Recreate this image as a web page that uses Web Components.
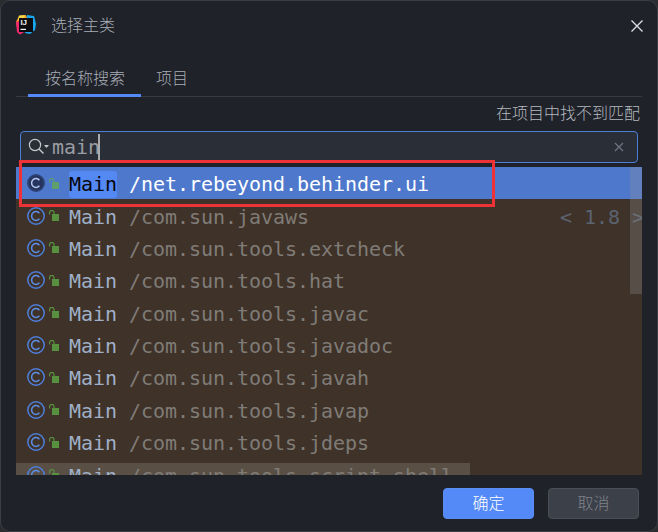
<!DOCTYPE html>
<html lang="zh">
<head>
<meta charset="utf-8">
<title>选择主类</title>
<style>
  html, body { margin: 0; height: 100%; background: #2a2c30; }
  body { font-family: "Noto Sans CJK SC", sans-serif; font-weight: 300; overflow: hidden; }
</style>
</head>
<body>
<main-dialog>
  <dialog-title>选择主类</dialog-title>
  <tab-bar></tab-bar>
  <hint-line>在项目中找不到匹配</hint-line>
  <search-field value="main"></search-field>
  <result-list>
    <result-row selected name="Main" path="/net.rebeyond.behinder.ui"></result-row>
    <result-row name="Main" path="/com.sun.javaws" extra="&lt; 1.8 &gt;"></result-row>
    <result-row name="Main" path="/com.sun.tools.extcheck"></result-row>
    <result-row name="Main" path="/com.sun.tools.hat"></result-row>
    <result-row name="Main" path="/com.sun.tools.javac"></result-row>
    <result-row name="Main" path="/com.sun.tools.javadoc"></result-row>
    <result-row name="Main" path="/com.sun.tools.javah"></result-row>
    <result-row name="Main" path="/com.sun.tools.javap"></result-row>
    <result-row name="Main" path="/com.sun.tools.jdeps"></result-row>
    <result-row hovered name="Main" path="/com.sun.tools.script.shell"></result-row>
  </result-list>
  <dialog-footer>
    <dialog-button primary>确定</dialog-button>
    <dialog-button>取消</dialog-button>
  </dialog-footer>
</main-dialog>

<script>
const mono = '"DejaVu Sans Mono", "Liberation Mono", monospace';

class MainDialog extends HTMLElement {
  constructor() {
    super();
    this.attachShadow({ mode: "open" });
    this.shadowRoot.innerHTML = `
      <style>
        :host {
          display: flex; flex-direction: column; box-sizing: border-box;
          width: 658px; height: 532px; position: relative; overflow: hidden;
          background: #1f2229; border: 1px solid #3b3e44; border-radius: 10px;
          padding: 0 15px;
        }
        .mark {
          position: absolute; left: 18px; top: 159px; width: 476px; height: 47px;
          box-sizing: border-box; border: 3px solid #ee3338; pointer-events: none;
        }
      </style>
      <slot></slot>
      <div class="mark"></div>
    `;
  }
}

class DialogTitle extends HTMLElement {
  constructor() {
    super();
    this.attachShadow({ mode: "open" });
    this.shadowRoot.innerHTML = `
      <style>
        :host {
          display: flex; align-items: center; height: 49px; padding-bottom: 4px; box-sizing: border-box;
          font-size: 16px; color: #a8adb6; position: relative;
        }
        svg { width: 20px; height: 22px; margin: 3px 15px 0 0; flex: none; }
        .close { position: absolute; right: -2px; top: 18px; width: 14px; height: 14px; margin: 0; }
      </style>
      <svg viewBox="0 0 20 22">
        <path d="M3 2 L10 1 L12 6 L5 20 L2 19 L0 8Z" fill="#f5a02a"/>
        <path d="M0 8 L8 5 L10 17 L4 20.5 L1 18Z" fill="#f0286c"/>
        <path d="M3 1.5 L9 1 L8 5 L2 6Z" fill="#f7d848"/>
        <path d="M11 1 L18 2 L20 10 L19 16 L14 20 L9 19Z" fill="#1aa7ee"/>
        <rect x="3" y="4" width="14" height="14" fill="#0c0c10"/>
        <text x="4.4" y="11" font-family="Liberation Sans" font-weight="700" font-size="8" fill="#f2f2f2">IJ</text>
        <rect x="4.5" y="14.8" width="5.5" height="1.2" fill="#f2f2f2"/>
      </svg>
      <slot></slot>
      <svg class="close" viewBox="0 0 14 14"><path d="M1.5 1.5 L12.5 12.5 M12.5 1.5 L1.5 12.5" stroke="#dfe1e5" stroke-width="1.3" fill="none"/></svg>
    `;
  }
}

class TabBar extends HTMLElement {
  constructor() {
    super();
    this.attachShadow({ mode: "open" });
    this.shadowRoot.innerHTML = `
      <style>
        :host {
          display: flex; height: 47px; padding-left: 12px; box-sizing: border-box;
          font-size: 16px; color: #a8adb6;
          box-shadow: inset 0 -1px 0 #363a42;
        }
        .tab { padding: 7px 16px 0 15px; display: flex; align-items: center; height: 47px; box-sizing: border-box; }
        .on { border-bottom: 3px solid #548af7; padding: 10px 16px 0 17px; }
      </style>
      <div class="tab on">按名称搜索</div>
      <div class="tab">项目</div>
    `;
  }
}

class HintLine extends HTMLElement {
  constructor() {
    super();
    this.attachShadow({ mode: "open" });
    this.shadowRoot.innerHTML = `
      <style>
        :host {
          display: flex; justify-content: flex-end; align-items: center; height: 34px; box-sizing: border-box;
          padding: 0 2px 4px 0; font-size: 16px; color: #b4b8bf;
        }
      </style>
      <slot></slot>
    `;
  }
}

class SearchField extends HTMLElement {
  constructor() {
    super();
    this.attachShadow({ mode: "open" });
    this.shadowRoot.innerHTML = `
      <style>
        :host {
          display: flex; align-items: center; box-sizing: border-box; height: 32px; flex: none;
          margin: 0 4px 4px 4px; background: #2a2e37; border: 1px solid #4e7ed8; border-radius: 4px;
          padding: 0 13px 0 7px; font: 400 20px ${mono}; color: #9a9da3;
        }
        svg { flex: none; }
        .caret { width: 2px; height: 26px; background: #a9abaf; margin-left: -2px; }
        .value { margin-left: 2px; letter-spacing: -.04px; }
        .clear { margin-left: auto; }
      </style>
      <svg width="22" height="18" viewBox="0 0 22 18">
        <circle cx="7" cy="7" r="5.6" fill="none" stroke="#c4c7cc" stroke-width="1.2"/>
        <path d="M11 11 L15.5 15.5" stroke="#c4c7cc" stroke-width="1.4"/>
        <path d="M16 7 L21 7 L18.5 10Z" fill="#c4c7cc"/>
      </svg>
      <span class="value"></span><span class="caret"></span>
      <svg class="clear" width="10" height="10" viewBox="0 0 10 10"><path d="M1 1 L9 9 M9 1 L1 9" stroke="#6f7682" stroke-width="1.2"/></svg>
    `;
    this.shadowRoot.querySelector(".value").textContent = this.getAttribute("value") || "";
  }
}

class ResultList extends HTMLElement {
  constructor() {
    super();
    this.attachShadow({ mode: "open" });
    this.shadowRoot.innerHTML = `
      <style>
        :host {
          display: block; height: 308px; flex: none; position: relative; overflow: hidden;
          background: #3f3229;
        }
        .thumb {
          position: absolute; right: 0; top: 0; width: 12px; height: 127px;
          background: rgba(150,150,150,.28);
        }
      </style>
      <slot></slot>
      <div class="thumb"></div>
    `;
  }
}

class ResultRow extends HTMLElement {
  constructor() {
    super();
    this.attachShadow({ mode: "open" });
    const selected = this.hasAttribute("selected");
    const green = selected ? "#5f9f6c" : "#57903f";
    this.shadowRoot.innerHTML = `
      <style>
        :host {
          display: flex; align-items: center; height: 32.375px; box-sizing: border-box;
          padding: 2px 0 0 10px; font: 400 20px ${mono}; letter-spacing: -.04px; white-space: pre;
          color: #7f7c77; position: relative;
        }
        :host([selected]) { background: #4d78cc; color: #fff; }
        :host([hovered]) { background: linear-gradient(transparent 5px, #5a4f45 5px); margin-right: 172px; }
        svg { flex: none; margin-top: -2px; }
        .lock { margin-left: 3px; margin-right: 10px; }
        .name { color: #9fb0c8; border-radius: 3px; margin-right: 12px; }
        :host([selected]) .name { color: #05070c; background: #5488f3; line-height: 27px; }
        .extra { position: absolute; left: 544px; color: #5b6270; }
      </style>
      <svg width="20" height="20" viewBox="0 0 20 20">
        <circle cx="10" cy="10" r="8.2" fill="${selected ? "#253560" : "none"}" stroke="${selected ? "#2f4577" : "#4d7fdc"}" stroke-width="1.5"/>
        <path d="M13.4 7.2 A4.4 4.4 0 1 0 13.4 12.8" fill="none" stroke="${selected ? "#b7c8ee" : "#5b8fe8"}" stroke-width="1.5"/>
      </svg>
      <svg class="lock" width="10" height="11" viewBox="0 0 10 11">
        <rect x="3" y="4" width="7" height="7" fill="${green}"/>
        <path d="M.6 4.5 V2.6 A2.2 2.2 0 0 1 5 2.6 V4" fill="none" stroke="${green}" stroke-width="1.2"/>
      </svg>
      <span class="name"></span><span class="path"></span><span class="extra"></span>
    `;
    this.shadowRoot.querySelector(".name").textContent = this.getAttribute("name");
    this.shadowRoot.querySelector(".path").textContent = this.getAttribute("path");
    this.shadowRoot.querySelector(".extra").textContent = this.getAttribute("extra") || "";
  }
}

class DialogFooter extends HTMLElement {
  constructor() {
    super();
    this.attachShadow({ mode: "open" });
    this.shadowRoot.innerHTML = `
      <style>
        :host { display: flex; justify-content: flex-end; gap: 14px; padding: 13px 3px 0 0; }
      </style>
      <slot></slot>
    `;
  }
}

class DialogButton extends HTMLElement {
  constructor() {
    super();
    this.attachShadow({ mode: "open" });
    this.shadowRoot.innerHTML = `
      <style>
        :host {
          display: flex; align-items: center; justify-content: center; box-sizing: border-box;
          width: 91px; height: 31px; border-radius: 4px; font-size: 16px; padding-bottom: 3px;
          background: #3c4049; border: 1px solid #4a4e57; color: #7f838b;
        }
        :host([primary]) { background: #548af7; border-color: #5a8ef5; color: #fff; }
      </style>
      <slot></slot>
    `;
  }
}

customElements.define("main-dialog", MainDialog);
customElements.define("dialog-title", DialogTitle);
customElements.define("tab-bar", TabBar);
customElements.define("hint-line", HintLine);
customElements.define("search-field", SearchField);
customElements.define("result-list", ResultList);
customElements.define("result-row", ResultRow);
customElements.define("dialog-footer", DialogFooter);
customElements.define("dialog-button", DialogButton);
</script>
</body>
</html>
